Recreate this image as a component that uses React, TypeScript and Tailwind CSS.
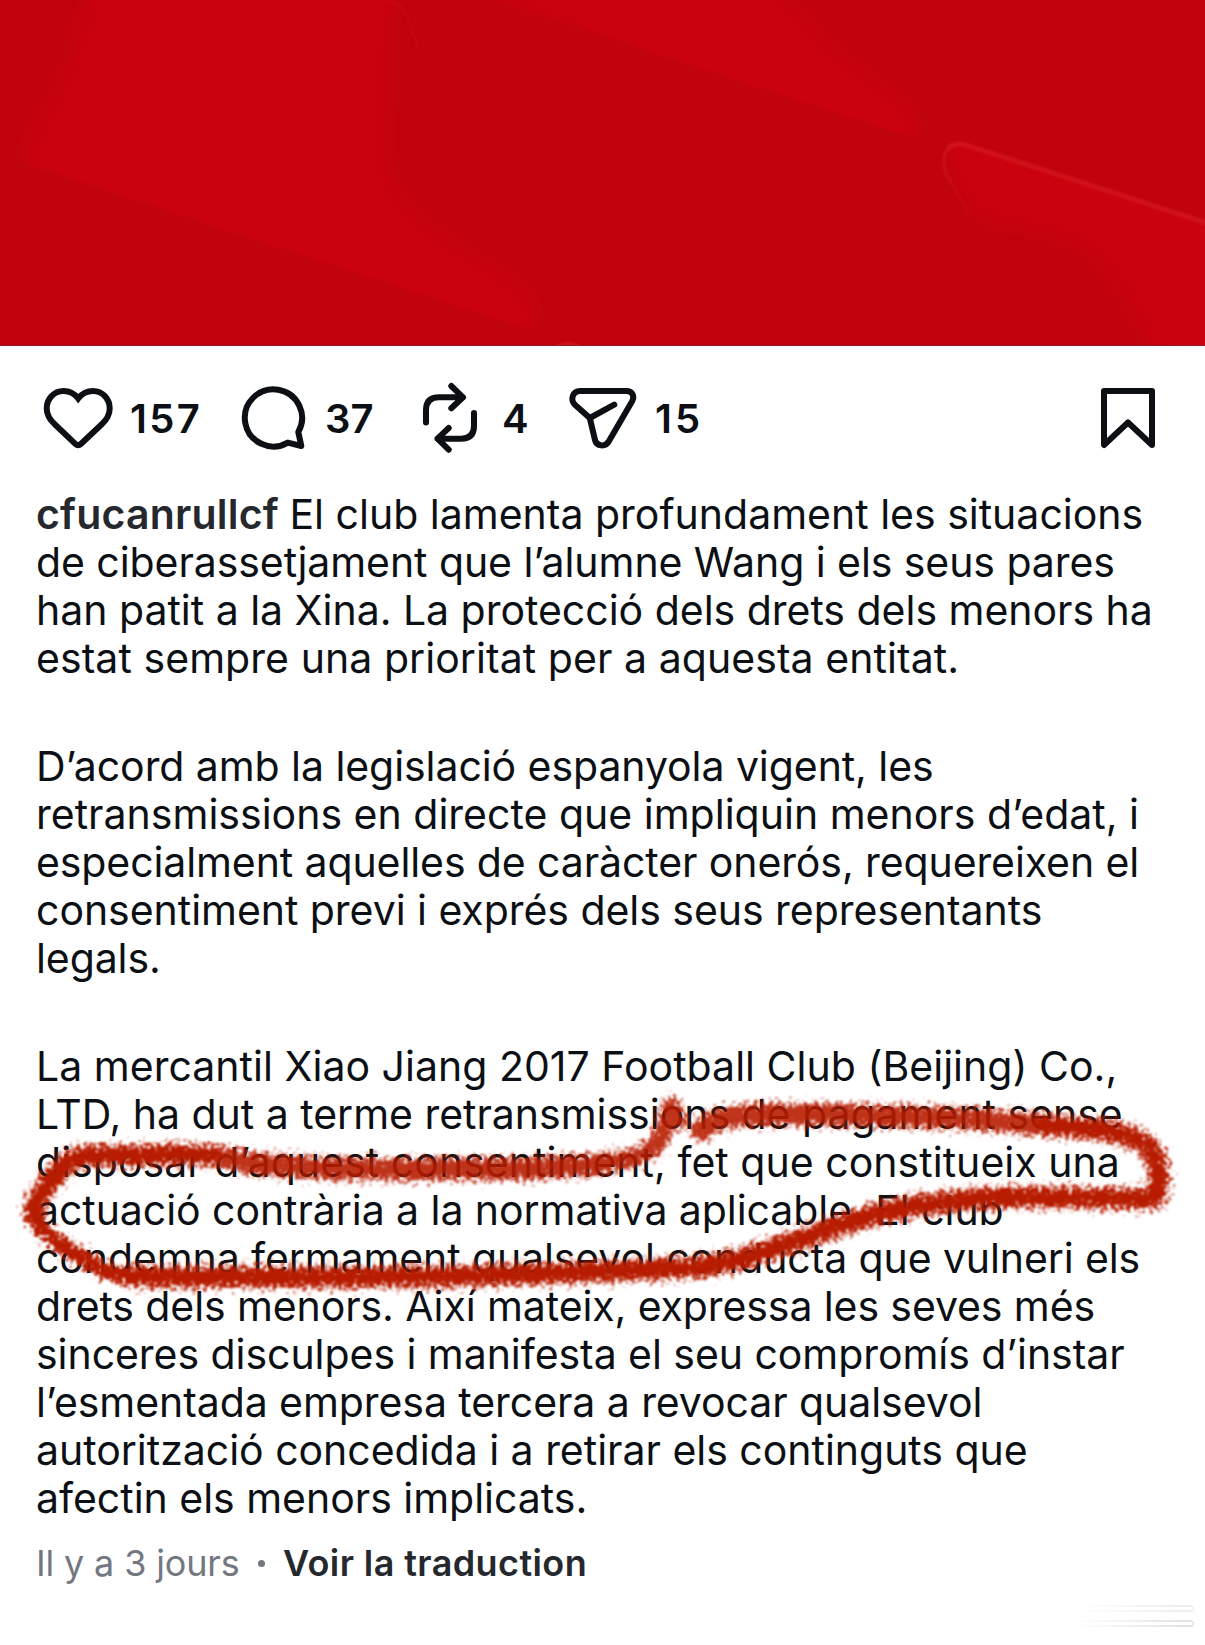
import type { ReactNode } from "react";

type Line = { text: string; track: string; author?: string };

const paragraphs: Line[][] = [
  [
    { author: "cfucanrullcf", text: "El club lamenta profundament les situacions", track: "tracking-[0px]" },
    { text: "de ciberassetjament que l’alumne Wang i els seus pares", track: "tracking-[-0.07px]" },
    { text: "han patit a la Xina. La protecció dels drets dels menors ha", track: "tracking-[-0.02px]" },
    { text: "estat sempre una prioritat per a aquesta entitat.", track: "tracking-[0.06px]" },
  ],
  [
    { text: "D’acord amb la legislació espanyola vigent, les", track: "tracking-[-0.07px]" },
    { text: "retransmissions en directe que impliquin menors d’edat, i", track: "tracking-[0.01px]" },
    { text: "especialment aquelles de caràcter onerós, requereixen el", track: "tracking-[-0.1px]" },
    { text: "consentiment previ i exprés dels seus representants", track: "tracking-[-0.04px]" },
    { text: "legals.", track: "tracking-[-0.1px]" },
  ],
  [
    { text: "La mercantil Xiao Jiang 2017 Football Club (Beijing) Co.,", track: "tracking-[0.02px]" },
    { text: "LTD, ha dut a terme retransmissions de pagament sense", track: "tracking-[-0.02px]" },
    { text: "disposar d’aquest consentiment, fet que constitueix una", track: "tracking-[0.03px]" },
    { text: "actuació contrària a la normativa aplicable. El club", track: "tracking-[-0.06px]" },
    { text: "condemna fermament qualsevol conducta que vulneri els", track: "tracking-[-0.1px]" },
    { text: "drets dels menors. Així mateix, expressa les seves més", track: "tracking-[-0.1px]" },
    { text: "sinceres disculpes i manifesta el seu compromís d’instar", track: "tracking-[-0.05px]" },
    { text: "l’esmentada empresa tercera a revocar qualsevol", track: "tracking-[-0.07px]" },
    { text: "autorització concedida i a retirar els continguts que", track: "tracking-[-0.02px]" },
    { text: "afectin els menors implicats.", track: "tracking-[-0.02px]" },
  ],
];

function Icon({ x, children }: { x: number; children: ReactNode }) {
  return (
    <svg
      viewBox={`${x} 382 72 72`}
      className="h-[72px] w-[72px] shrink-0"
      fill="none"
      stroke="#0c1014"
      strokeWidth={6}
      strokeLinecap="round"
      strokeLinejoin="round"
    >
      {children}
    </svg>
  );
}

function PostImage() {
  return (
    <svg viewBox="0 0 1205 346" className="block h-[346px] w-full bg-[#c0030d]">
      <defs>
        <filter id="soft" x="-20%" y="-20%" width="140%" height="140%" colorInterpolationFilters="sRGB">
          <feGaussianBlur stdDeviation="13" />
        </filter>
        <filter id="edge" x="-20%" y="-20%" width="140%" height="140%" colorInterpolationFilters="sRGB">
          <feGaussianBlur stdDeviation="1.2" />
        </filter>
        <clipPath id="cutA">
          <path d="M0 -20 H385 Q402 -8 408 8 L440 160 L545 290 Q545 332 522 328 L20 162 L0 150Z" />
        </clipPath>
        <clipPath id="cutB">
          <path d="M430 -20 H900 L922 110 Q928 142 916 139Z" />
        </clipPath>
        <clipPath id="cutC">
          <path d="M974 226 L943 166 Q942 140 966 143 L1205 223 V346 H1000Z" />
        </clipPath>
        <linearGradient id="fade" x1="0" y1="0" x2="0" y2="1">
          <stop offset="0" stopColor="#d0141c" />
          <stop offset="1" stopColor="#d0141c" stopOpacity="0" />
        </linearGradient>
      </defs>
      <g clipPath="url(#cutA)">
        <path d="M92 -40 H395 L385 150 Q385 200 440 235 L525 290 Q545 320 530 345 L20 180 L30 140 Q85 60 92 -40Z" fill="#cb020f" filter="url(#soft)" />
      </g>
      <g clipPath="url(#cutB)">
        <path d="M400 -40 H755 L820 40 L905 105 Q930 140 910 165Z" fill="#cb020f" filter="url(#soft)" />
      </g>
      <g clipPath="url(#cutC)">
        <path d="M930 120 L1230 210 V370 H1155 Q1130 275 1075 240 L970 215Z" fill="#cb020f" filter="url(#soft)" />
      </g>
      <path d="M975 228 Q962 200 946 174 Q940 154 951 146" fill="none" stroke="url(#fade)" strokeWidth="3" filter="url(#edge)" />
      <path d="M948 149 Q954 141 966 145 L1207 223" fill="none" stroke="#d0121b" strokeWidth="5" filter="url(#edge)" />
      <path d="M380 -2 Q400 2 405 12 L419 50" fill="none" stroke="#cb0d17" strokeWidth="2" filter="url(#edge)" opacity="0.6" />
      <ellipse cx="568" cy="346" rx="12" ry="4" fill="#d00f19" />
      <path d="M0 345.5 H1205" stroke="#981426" strokeWidth="1" />
    </svg>
  );
}

// Crayon loop drawn over the middle of the caption
function Scribble() {
  const top = "M702 1130 C708 1120 730 1116 754 1115 S816 1114 850 1115 S950 1117 986 1120 S1020 1123 1044 1125";
  const right =
    "M1044 1125 C1070 1128 1080 1127 1101 1130 S1145 1138 1153 1154 S1160 1180 1156 1197 C1140 1200 1120 1198 1101 1198 S1010 1196 986 1198 S920 1204 889 1211 S830 1229 793 1242 S730 1264 696 1267 S560 1273 501 1275 S330 1278 270 1277 S155 1279 133 1276";
  const lower = "M133 1276 C105 1276 94 1264 77 1254 S38 1232 34 1213";
  const left = "M34 1213 C34 1200 46 1186 55 1176 S66 1157 88 1156 S140 1156 166 1155 S200 1154 216 1156";
  const middle = "M216 1156 C230 1159 250 1164 270 1165 S320 1169 347 1169 S410 1170 444 1169 S510 1171 540 1168 S585 1167 605 1163";
  const hook = "M605 1163 C630 1159 645 1156 655 1146 S664 1122 671 1106 L679 1120";
  return (
    <svg
      viewBox="0 1080 1205 220"
      className="pointer-events-none absolute top-[1080px] left-0 h-[220px] w-full"
      fill="none"
      strokeLinecap="round"
      strokeLinejoin="round"
    >
      <defs>
        <filter id="crayon" filterUnits="userSpaceOnUse" x="0" y="1080" width="1205" height="220" colorInterpolationFilters="sRGB">
          <feTurbulence type="fractalNoise" baseFrequency="0.26" numOctaves="3" seed="7" result="noise" />
          <feDisplacementMap in="SourceGraphic" in2="noise" scale="25" xChannelSelector="R" yChannelSelector="G" />
          <feGaussianBlur stdDeviation="0.8" />
        </filter>
      </defs>
      <g filter="url(#crayon)" stroke="#b81c00">
        <g strokeWidth="24" opacity="0.5">
          <path d={top} />
          <path d={right} />
          <path d={left} />
          <path d={middle} />
          <path d={hook} strokeWidth="20" />
        </g>
        <g strokeWidth="18" opacity="0.8">
          <path d={top} />
          <path d={middle} />
          <path d={hook} strokeWidth="15" />
        </g>
        <g strokeWidth="17">
          <path d={right} />
          <path d={lower} strokeWidth="16" />
          <path d={left} />
        </g>
      </g>
    </svg>
  );
}

export default function App() {
  return (
    <main className="relative h-[1645px] w-[1205px] overflow-hidden bg-white font-['Inter',sans-serif] text-[#0c1014]">
      <PostImage />

      <div className="flex items-center pt-9 pr-[41px] pl-[42px] text-[40px] leading-[74px] font-semibold">
        <div className="flex h-[72px] w-[195px] gap-4 tracking-[2.4px]">
          <Icon x={42}>
            <path d="M78.2 398.5 C74.5 393.5 69 391 63.5 391 C54 391 46.7 398.8 46.7 408.5 C46.7 415 50 420 55 424.5 L75.3 443.8 Q78.2 446.5 81.1 443.8 L101.5 424.5 C106.5 420 109.7 415 109.7 408.5 C109.7 398.8 102.5 391 93 391 C87.5 391 82 393.5 78.2 398.5Z" strokeLinejoin="miter" />
          </Icon>
          157
        </div>
        <div className="flex h-[72px] w-[177px] gap-4">
          <Icon x={237}>
            <path d="M298.3 432 A28.6 28.6 0 1 0 287.8 442.6 L301.3 446 Z" />
          </Icon>
          37
        </div>
        <div className="flex h-[72px] w-[153px] gap-4">
          <Icon x={414}>
            <path d="M426 422.5 V410 Q426 397.3 439 397.3 H462.5" />
            <path d="M451.3 386 L463 397.3 L451.3 408.3" />
            <path d="M474 413 V426 Q474 438.7 461 438.7 H438" />
            <path d="M448.7 428 L437.5 438.7 L448.7 449.7" />
          </Icon>
          4
        </div>
        <div className="flex h-[72px] flex-1 gap-4 tracking-[3px]">
          <Icon x={567}>
            <path d="M580 391 H626.5 C632.5 391 635 396.5 632 401.5 L609 441 C605.5 447.5 596.5 446.5 595 440 L589.8 418 L575.2 405 C569.5 399.5 573 391 580 391Z" />
            <path d="M589.8 418 L614.3 404.7" />
          </Icon>
          15
        </div>
        <Icon x={1092}>
          <path d="M1104 391 H1152 V445 L1128 422.5 L1104 445Z" />
        </Icon>
      </div>

      <section className="flex flex-col gap-[60px] pt-9 pl-9 text-[41px] leading-[48px]">
        {paragraphs.map((lines, i) => (
          <div key={i}>
            {lines.map((line) => (
              <p key={line.text} className={`whitespace-nowrap ${line.track}`}>
                {line.author && <b className="font-semibold tracking-[0.2px] text-[#25282d]">{line.author} </b>}
                {line.text}
              </p>
            ))}
          </div>
        ))}
      </section>

      <footer className="flex items-center pt-[13px] pl-9 text-[36px] leading-[56px] whitespace-nowrap">
        <span className="w-[218px] tracking-[-0.15px] text-[#737780]">Il y a 3 jours</span>
        <span className="mr-[18px] ml-[4px] size-[7px] rounded-full bg-[#737780]" />
        <span className="font-semibold tracking-[0.4px] text-[#25282d]">Voir la traduction</span>
      </footer>

      <div className="absolute top-[1605px] right-[11px] flex w-[150px] flex-col gap-2">
        <span className="h-[7px] rounded-r-sm border-y-2 border-r border-[#ececec] blur-[0.5px] [mask-image:linear-gradient(to_right,transparent_20%,black)]" />
        <span className="h-[7px] rounded-r-sm border-y-2 border-r border-[#e0e0e0] blur-[0.5px] [mask-image:linear-gradient(to_right,transparent_20%,black)]" />
      </div>

      <Scribble />
    </main>
  );
}
